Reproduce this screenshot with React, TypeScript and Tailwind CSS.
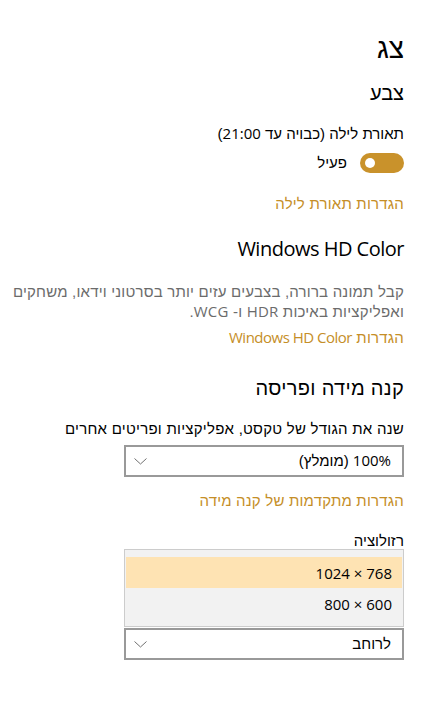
const heb = { fontFamily: '"Liberation Sans", "DejaVu Sans", sans-serif' };
const lat = { fontFamily: '"Open Sans", "Liberation Sans", sans-serif' };

function L({ children }: { children: React.ReactNode }) {
  return (
    <span style={lat} className="leading-none">
      {children}
    </span>
  );
}

function Chevron() {
  return (
    <svg width="13" height="7" viewBox="0 0 13 7" fill="none" className="shrink-0">
      <path d="M0.5 0.5 L6.5 6 L12.5 0.5" stroke="#707070" strokeWidth="1" />
    </svg>
  );
}

function Select({ children }: { children: React.ReactNode }) {
  return (
    <div className="flex h-8 w-[280px] items-center justify-between border-2 border-[#999999] bg-white pl-[8px] pr-[11px]">
      <span className="text-[15px] leading-5 text-black">{children}</span>
      <Chevron />
    </div>
  );
}

function Link({ children }: { children: React.ReactNode }) {
  return <div className="text-[15px] leading-5 tracking-[0.2px] text-[#c58e27]">{children}</div>;
}

export default function App() {
  return (
    <div
      dir="rtl"
      style={heb}
      className="relative h-[703px] w-[422px] overflow-hidden bg-white pl-[12px] pr-[18px] text-black"
    >
      <h1 className="mt-[31px] text-[28px] font-light leading-9">צג</h1>

      <h2 className="mt-[12px] text-[20px] leading-7">צבע</h2>

      <div className="mt-[17px] text-[15px] leading-5">
        תאורת לילה (כבויה עד <L>21:00</L>)
      </div>

      <div className="mt-[9px] flex items-center gap-[13px]">
        <div dir="ltr" className="flex h-5 w-11 items-center rounded-full bg-[#c9922b] pl-[5px]">
          <div className="h-[10px] w-[10px] rounded-full bg-white" />
        </div>
        <span className="text-[15px] leading-5">פעיל</span>
      </div>

      <div className="mt-[21px]">
        <Link>הגדרות תאורת לילה</Link>
      </div>

      <h2 style={lat} className="mt-[21px] text-[20px] leading-7 tracking-[-0.5px]">
        Windows HD Color
      </h2>

      <p className="mt-[19px] whitespace-nowrap text-[15px] leading-5 tracking-[0.2px] text-[#6b6b6b]">
        קבל תמונה ברורה, בצבעים עזים יותר בסרטוני וידאו, משחקים
        <br />
        ואפליקציות באיכות <L>HDR</L> ו- <L>WCG</L>.
      </p>

      <div className="mt-[6px]">
        <Link>
          הגדרות{' '}
          <span style={lat} className="leading-none tracking-[-0.5px]">
            Windows HD Color
          </span>
        </Link>
      </div>

      <h2 className="mt-[26px] text-[20px] leading-7 tracking-[0.3px]">קנה מידה ופריסה</h2>

      <div className="mt-[17px] whitespace-nowrap text-[15px] leading-5 tracking-[0.25px]">
        שנה את הגודל של טקסט, אפליקציות ופריטים אחרים
      </div>

      <div className="mt-[6px]">
        <Select>
          <L>100%</L> (מומלץ)
        </Select>
      </div>

      <div className="mt-[14px]">
        <Link>הגדרות מתקדמות של קנה מידה</Link>
      </div>

      <div className="relative">
        <div className="mt-[20px] text-[15px] leading-5">רזולוציה</div>
        <div className="invisible mt-[6px]">
          <Select>
            <L>1024 × 768</L>
          </Select>
        </div>
        <div className="invisible mt-[13px] text-[15px] leading-5">כיוון תצוגה</div>
        <div className="mt-[6px]">
          <Select>לרוחב</Select>
        </div>

        {/* open resolution list */}
        <div className="absolute right-0 top-[18px] w-[280px] border border-[#cccccc] bg-[#f2f2f2] py-[7px]">
          <div className="mx-px flex h-[31px] items-center bg-[#fee3b3] pr-[10px] text-[15px] leading-5">
            <span dir="ltr" style={lat}>
              1024 × 768
            </span>
          </div>
          <div className="mx-px flex h-[31px] items-center pr-[10px] text-[15px] leading-5">
            <span dir="ltr" style={lat}>
              800 × 600
            </span>
          </div>
        </div>
      </div>

      <h2 className="mt-[34px] text-[20px] leading-7">מספר צגים</h2>
    </div>
  );
}
